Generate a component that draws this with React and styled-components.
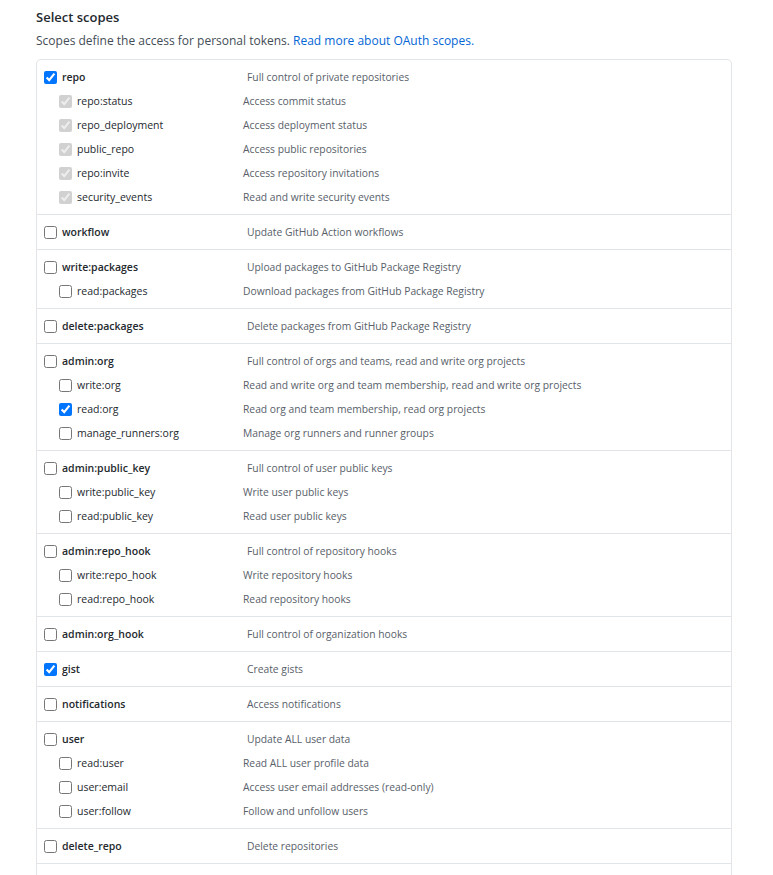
import styled, { createGlobalStyle } from "styled-components";

const scopes = [
  {
    name: "repo",
    desc: "Full control of private repositories",
    checked: true,
    children: [
      { name: "repo:status", desc: "Access commit status", checked: true, disabled: true },
      { name: "repo_deployment", desc: "Access deployment status", checked: true, disabled: true },
      { name: "public_repo", desc: "Access public repositories", checked: true, disabled: true },
      { name: "repo:invite", desc: "Access repository invitations", checked: true, disabled: true },
      { name: "security_events", desc: "Read and write security events", checked: true, disabled: true },
    ],
  },
  { name: "workflow", desc: "Update GitHub Action workflows" },
  {
    name: "write:packages",
    desc: "Upload packages to GitHub Package Registry",
    children: [{ name: "read:packages", desc: "Download packages from GitHub Package Registry" }],
  },
  { name: "delete:packages", desc: "Delete packages from GitHub Package Registry" },
  {
    name: "admin:org",
    desc: "Full control of orgs and teams, read and write org projects",
    children: [
      { name: "write:org", desc: "Read and write org and team membership, read and write org projects" },
      { name: "read:org", desc: "Read org and team membership, read org projects", checked: true },
      { name: "manage_runners:org", desc: "Manage org runners and runner groups" },
    ],
  },
  {
    name: "admin:public_key",
    desc: "Full control of user public keys",
    children: [
      { name: "write:public_key", desc: "Write user public keys" },
      { name: "read:public_key", desc: "Read user public keys" },
    ],
  },
  {
    name: "admin:repo_hook",
    desc: "Full control of repository hooks",
    children: [
      { name: "write:repo_hook", desc: "Write repository hooks" },
      { name: "read:repo_hook", desc: "Read repository hooks" },
    ],
  },
  { name: "admin:org_hook", desc: "Full control of organization hooks" },
  { name: "gist", desc: "Create gists", checked: true },
  { name: "notifications", desc: "Access notifications" },
  {
    name: "user",
    desc: "Update ALL user data",
    children: [
      { name: "read:user", desc: "Read ALL user profile data" },
      { name: "user:email", desc: "Access user email addresses (read-only)" },
      { name: "user:follow", desc: "Follow and unfollow users" },
    ],
  },
  { name: "delete_repo", desc: "Delete repositories" },
  { name: "write:discussion", desc: "Read and write team discussions" },
];

const App = () => {
  return (
    <>
      <GlobalStyle />
      <Page>
        <Title>Select scopes</Title>
        <Note>
          Scopes define the access for personal tokens.{" "}
          <Link href="#">Read more about OAuth scopes.</Link>
        </Note>
        <ScopeBox>
          {scopes.map((scope) => (
            <Group key={scope.name}>
              <Row>
                <Label>
                  <input type="checkbox" defaultChecked={!!scope.checked} />
                  <Name bold>{scope.name}</Name>
                </Label>
                <Desc>{scope.desc}</Desc>
              </Row>
              {scope.children &&
                scope.children.map((child) => (
                  <Row key={child.name} child>
                    <Label>
                      <input
                        type="checkbox"
                        defaultChecked={!!child.checked}
                        disabled={!!child.disabled}
                      />
                      <Name>{child.name}</Name>
                    </Label>
                    <Desc>{child.desc}</Desc>
                  </Row>
                ))}
            </Group>
          ))}
        </ScopeBox>
      </Page>
    </>
  );
};

const GlobalStyle = createGlobalStyle`
  html, body {
    margin: 0;
    height: 875px;
    overflow: hidden;
    background: #fff;
    font-family: "Open Sans", "Noto Sans", sans-serif;
    color: #24292e;
  }
`;

const Page = styled.div`
  padding: 7px 41px 0 36px;
`;

const Title = styled.div`
  font-size: 13px;
  font-weight: 600;
  line-height: 20px;
  color: #24292e;
`;

const Note = styled.p`
  margin: 4px 0 8px;
  font-size: 12px;
  line-height: 20px;
  color: #444d56;
`;

const Link = styled.a`
  color: #0366d6;
  text-decoration: none;
`;

const ScopeBox = styled.div`
  border: 1px solid #e1e4e8;
  border-radius: 5px;
`;

const Group = styled.div`
  padding: 5px 0;
  border-bottom: 1px solid #e1e4e8;
`;

const Row = styled.div`
  display: grid;
  grid-template-columns: ${({ child }) => (child ? "184px 1fr" : "203px 1fr")};
  align-items: center;
  height: 24px;
  padding-left: ${({ child }) => (child ? "15px" : "0")};
  margin-left: 7px;
`;

const Label = styled.label`
  display: flex;
  align-items: center;
  gap: 5px;

  input {
    margin: 0;
    width: 13px;
    height: 13px;
  }
`;

const Name = styled.span`
  font-size: 10.5px;
  font-weight: ${({ bold }) => (bold ? 600 : 400)};
  color: #24292e;
`;

const Desc = styled.span`
  font-size: 10.3px;
  color: #586069;
`;

export default App;
